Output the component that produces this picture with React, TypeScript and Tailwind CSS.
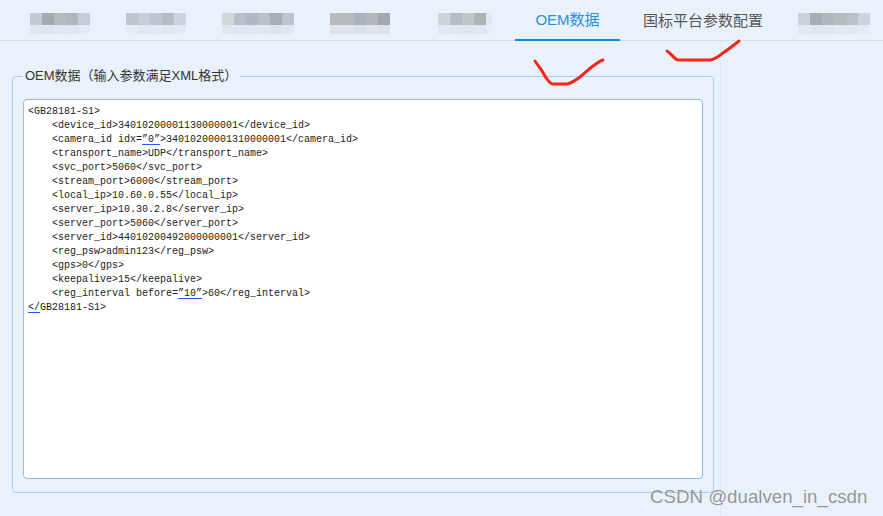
const CJK = "font-['Liberation_Sans','Noto_Sans_CJK_SC',sans-serif]";

function Blurred({ className, top, bottom }: { className: string; top: string[]; bottom: string[] }) {
    return (
        <div className={`${className} flex flex-col`}>
            <div className="flex h-3">
                {top.map((c, i) => (
                    <div key={i} className="w-3 shrink-0" style={{ backgroundColor: c }} />
                ))}
            </div>
            <div className="flex h-[9px]">
                {bottom.map((c, i) => (
                    <div key={i} className="w-3 shrink-0" style={{ backgroundColor: c }} />
                ))}
            </div>
        </div>
    );
}

function Squiggle({ children }: { children: React.ReactNode }) {
    return <span className="underline decoration-[#1d5fe8] underline-offset-2">{children}</span>;
}

function XmlText() {
    return (
        <pre className="m-0 font-['Liberation_Mono',monospace] text-[10px] leading-[14px] text-[#222]">
            {'<GB28181-S1>\n'}
            {'    <device_id>34010200001130000001</device_id>\n'}
            {'    <camera_id idx='}
            <Squiggle>”0”</Squiggle>
            {'>34010200001310000001</camera_id>\n'}
            {'    <transport_name>UDP</transport_name>\n'}
            {'    <svc_port>5060</svc_port>\n'}
            {'    <stream_port>6000</stream_port>\n'}
            {'    <local_ip>10.60.0.55</local_ip>\n'}
            {'    <server_ip>10.30.2.8</server_ip>\n'}
            {'    <server_port>5060</server_port>\n'}
            {'    <server_id>44010200492000000001</server_id>\n'}
            {'    <reg_psw>admin123</reg_psw>\n'}
            {'    <gps>0</gps>\n'}
            {'    <keepalive>15</keepalive>\n'}
            {'    <reg_interval before='}
            <Squiggle>”10”</Squiggle>
            {'>60</reg_interval>\n'}
            <Squiggle>{'</'}</Squiggle>
            {'GB28181-S1>'}
        </pre>
    );
}

export default function App() {
    return (
        <div className={`relative flex h-[516px] w-[883px] flex-col overflow-hidden bg-[#e9f1fb] ${CJK}`}>
            {/* Tabs */}
            <div className="flex h-[41px] shrink-0 border-b border-[#dcdfe2]">
                <Blurred
                    className="ml-[30px] mt-[13px]"
                    top={['#c3cad6', '#a4a9b2', '#b6bbc0', '#b1b6bd', '#c5cddb']}
                    bottom={['#dfe6f0', '#dde4ee', '#e0e7f1', '#dfe6f0', '#e3eaf4']}
                />
                <Blurred
                    className="ml-9 mt-[13px]"
                    top={['#bfc5cd', '#c8ced8', '#bfc5ce', '#b6bbc4', '#cdd4df']}
                    bottom={['#e6edf7', '#e0e7f1', '#e2e9f3', '#dfe6f0', '#e3eaf4']}
                />
                <Blurred
                    className="ml-9 mt-[13px]"
                    top={['#d4d7da', '#bac0ca', '#b3b8c2', '#bac2c8', '#a9acb2', '#bcc4ce']}
                    bottom={['#e3e8f0', '#dfe5ef', '#e0e6f0', '#e1e7f1', '#dde3ec', '#e1e7f1']}
                />
                <Blurred
                    className="ml-9 mt-[13px]"
                    top={['#b8babd', '#b7b9bd', '#abb2bc', '#b5b8bb', '#a4a7b0']}
                    bottom={['#dee3ea', '#dfe4eb', '#dbe1ea', '#dfe4eb', '#dce1ea']}
                />
                <Blurred
                    className="ml-12 mt-[13px] w-[54px] overflow-hidden"
                    top={['#d0d4d9', '#b8bcc2', '#c2c6cb', '#b0b2b5', '#dfe6ef']}
                    bottom={['#e3e9f2', '#e0e6ef', '#dfe5ee', '#e1e7f0', '#e6edf6']}
                />
                <div className="ml-[23px] flex h-[41px] w-[105px] items-center justify-center border-b-2 border-[#0d8be0] pt-0.5 text-[15px] text-[#2a8fe0]">
                    OEM数据
                </div>
                <div className="ml-[3px] flex h-10 w-40 items-center justify-center pt-0.5 text-[15px] text-[#555]">
                    国标平台参数配置
                </div>
                <Blurred
                    className="ml-[15px] mt-[13px]"
                    top={['#cdd2da', '#a9acb3', '#b2b5bb', '#b7bbc0', '#bbc0c7', '#cdd4df']}
                    bottom={['#e3e9f2', '#dfe5ee', '#e0e6ef', '#e3e9f2', '#e2e8f1', '#e5ebf4']}
                />
            </div>

            {/* Panel */}
            <div className="flex-1">
                <div className="h-[475px] w-[721px] border-r border-dotted border-[#dbe1e9] pl-3 pt-[27px]">
                    <fieldset className="h-[425px] w-[702px] rounded-[4px] border border-[#a3d0fb] px-[10px] pb-[13px]">
                        <legend className="pl-[2px] pr-[3px] text-[13px] leading-[16px] text-[#333]">
                            OEM数据（输入参数满足XML格式）
                        </legend>
                        <div className="mt-[15px] h-[380px] w-[680px] rounded-[4px] border border-[#8fb8ec] bg-white px-1 pt-[5px]">
                            <XmlText />
                        </div>
                    </fieldset>
                </div>
            </div>

            {/* Hand-drawn marks */}
            <svg className="absolute left-0 top-0" width="883" height="516" fill="none">
                <path
                    d="M535 61 L540 68 C543 72 545 77 547 79 C549 82 551 84 553 84 L567 84 C572 83 576 80 580 77 C585 73 589 69 593 66 C597 63 600 61 603 60"
                    stroke="#f8231a"
                    strokeWidth="3"
                    strokeLinecap="round"
                />
                <path
                    d="M667 51 C671 53 674 59 678 60 L710 60 C716 59 719 56 723 53 C729 49 734 45 739 41"
                    stroke="#f8231a"
                    strokeWidth="3"
                    strokeLinecap="round"
                />
            </svg>

            {/* Watermark */}
            <div className="absolute left-[650px] top-[486px] font-['Liberation_Sans',sans-serif] text-[18.7px] leading-[22px] text-[#969696] [text-shadow:0_0_1px_#fff]">
                CSDN @dualven_in_csdn
            </div>
        </div>
    );
}
